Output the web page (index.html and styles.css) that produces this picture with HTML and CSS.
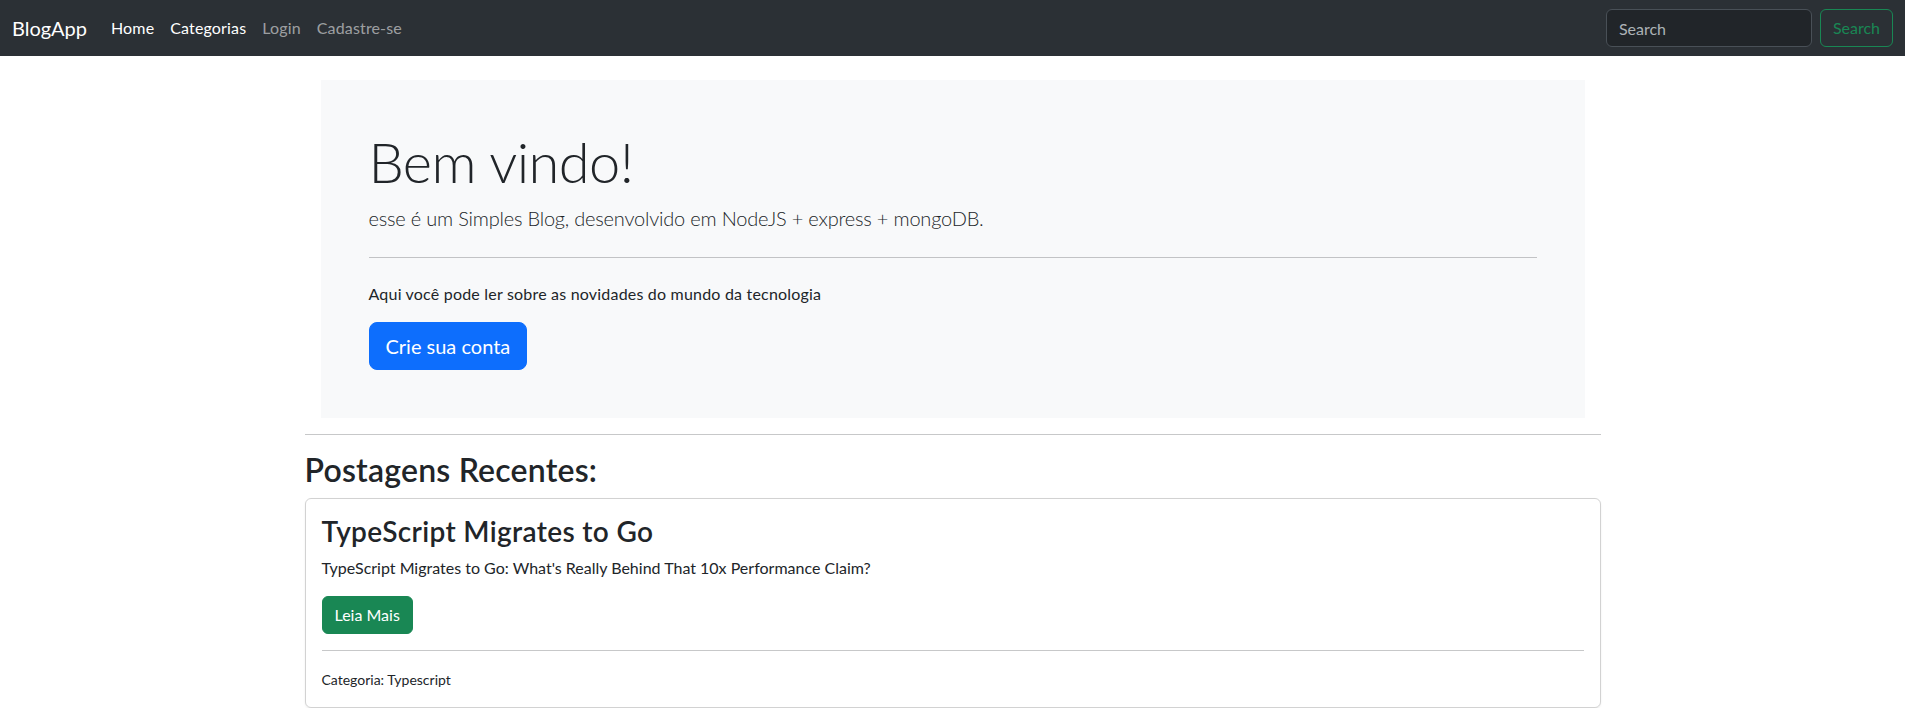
FILE: index.html
```html
<!DOCTYPE html>
<html lang="pt-BR">
<head>
<meta charset="utf-8">
<title>BlogApp</title>
<link rel="stylesheet" href="styles.css">
</head>
<body>
<nav class="navbar">
  <a class="brand" href="#">BlogApp</a>
  <ul class="nav-links">
    <li><a class="nav-link active" href="#">Home</a></li>
    <li><a class="nav-link active" href="#">Categorias</a></li>
    <li><a class="nav-link" href="#">Login</a></li>
    <li><a class="nav-link" href="#">Cadastre-se</a></li>
  </ul>
  <form class="search">
    <input class="search-input" type="search" placeholder="Search">
    <button class="search-btn" type="button">Search</button>
  </form>
</nav>
<main class="container">
  <section class="hero">
    <h1 class="display">Bem vindo!</h1>
    <p class="lead">esse é um Simples Blog, desenvolvido em NodeJS + express + mongoDB.</p>
    <hr class="hero-rule">
    <p class="hero-text">Aqui você pode ler sobre as novidades do mundo da tecnologia</p>
    <a class="btn btn-primary btn-lg" href="#">Crie sua conta</a>
  </section>
  <hr class="divider">
  <h2 class="section-title">Postagens Recentes:</h2>
  <article class="card">
    <h3 class="card-title">TypeScript Migrates to Go</h3>
    <p class="card-text">TypeScript Migrates to Go: What's Really Behind That 10x Performance Claim?</p>
    <a class="btn btn-success" href="#">Leia Mais</a>
    <hr class="card-rule">
    <div class="card-meta"><small>Categoria: Typescript</small></div>
  </article>
</main>
</body>
</html>
```

FILE: styles.css
```css
* { box-sizing: border-box; }
html, body { margin: 0; padding: 0; }
body {
  font-family: "Segoe UI", Lato, "Liberation Sans", sans-serif;
  font-size: 16px;
  line-height: 1.5;
  color: #212529;
  background: #fff;
}
a { text-decoration: none; }

.navbar {
  display: flex;
  align-items: center;
  height: 56px;
  padding: 8px 12px;
  background: #2b3035;
}
.brand {
  font-size: 20px;
  line-height: 30px;
  color: #fff;
  margin-right: 16px;
}
.nav-links {
  display: flex;
  list-style: none;
  margin: 0;
  padding: 0;
  flex: 1;
}
.nav-link {
  display: block;
  padding: 8px;
  color: rgba(255, 255, 255, 0.55);
  letter-spacing: 0.15px;
}
.nav-link.active { color: #fff; }

.search { display: flex; align-items: center; }
.search-input {
  width: 206px;
  height: 38px;
  margin-right: 8px;
  padding: 6px 12px;
  font: inherit;
  color: #dee2e6;
  background: #212529;
  border: 1px solid #495057;
  border-radius: 6px;
}
.search-input::placeholder { color: rgba(222, 226, 230, 0.75); }
.search-btn {
  height: 38px;
  padding: 6px 12px;
  font: inherit;
  color: #198754;
  background: transparent;
  border: 1px solid #198754;
  border-radius: 6px;
}

.container {
  max-width: 1320px;
  margin: 0 auto;
  padding: 0 12px;
}
.hero {
  margin: 24px 16px 0;
  padding: 48px;
  background: #f8f9fa;
}
.display {
  margin: 0 0 8px;
  font-size: 56px;
  font-weight: 300;
  line-height: 1.2;
  letter-spacing: -0.6px;
}
.lead {
  margin: 0;
  font-size: 20px;
  font-weight: 300;
  letter-spacing: -0.2px;
}
.hero-rule {
  margin: 24px 0;
  border: 0;
  border-top: 1px solid #212529;
  opacity: 0.25;
}
.hero-text { margin: 0 0 16px; letter-spacing: 0.2px; }

.btn {
  display: inline-block;
  color: #fff;
  border: 1px solid transparent;
  padding: 6px 12px;
  font-size: 16px;
  line-height: 24px;
  border-radius: 6px;
}
.btn-primary { background: #0d6efd; border-color: #0d6efd; }
.btn-success { background: #198754; border-color: #198754; }
.btn-lg {
  padding: 8px 16px;
  font-size: 20px;
  line-height: 30px;
  border-radius: 8px;
}

.divider {
  margin: 16px 0;
  border: 0;
  border-top: 1px solid #212529;
  opacity: 0.25;
}
.section-title {
  margin: 0 0 8px;
  font-size: 32px;
  font-weight: 600;
  line-height: 1.2;
  letter-spacing: 0.2px;
}
.card {
  padding: 16px;
  border: 1px solid rgba(0, 0, 0, 0.175);
  border-radius: 6px;
  box-shadow: 0 1px 2px rgba(0, 0, 0, 0.075);
}
.card-title {
  margin: 0 0 8px;
  font-size: 28px;
  font-weight: 600;
  line-height: 1.2;
  letter-spacing: 0.35px;
}
.card-text { margin: 0 0 16px; }
.card-rule {
  margin: 16px 0;
  border: 0;
  border-top: 1px solid #212529;
  opacity: 0.25;
}
.card-meta small { font-size: 14px; }
```
